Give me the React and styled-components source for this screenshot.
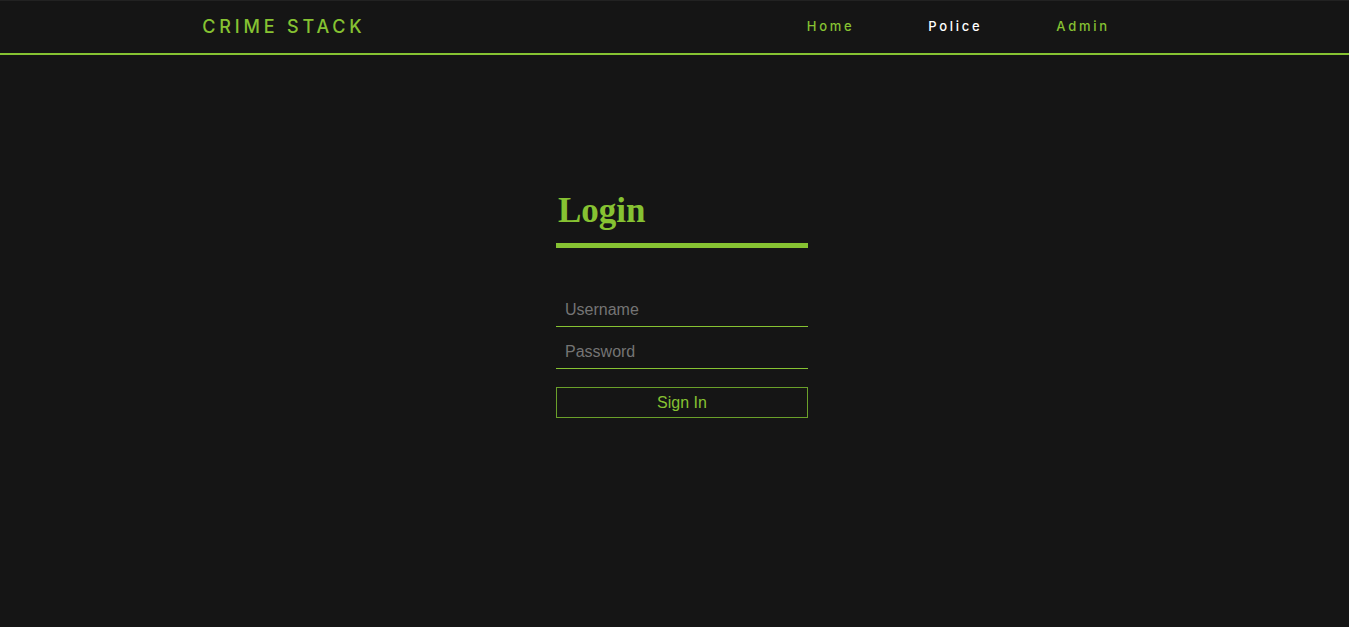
import React from 'react'
import styled, { createGlobalStyle } from 'styled-components'

const GREEN = '#86c232'

const Global = createGlobalStyle`
  html, body {
    margin: 0;
    padding: 0;
    background: #151515;
  }
  * { box-sizing: border-box; }
`

function App() {
  return (
    <Page>
      <Global />
      <Header>
        <Logo href="#">CRIME STACK</Logo>
        <Nav>
          <NavLink href="#">Home</NavLink>
          <NavLink href="#" active>Police</NavLink>
          <NavLink href="#">Admin</NavLink>
        </Nav>
      </Header>
      <Main>
        <Card>
          <Title>Login</Title>
          <Bar />
          <Form onSubmit={(e) => e.preventDefault()}>
            <Input type="text" placeholder="Username" />
            <Input type="password" placeholder="Password" />
            <Button type="submit">Sign In</Button>
          </Form>
        </Card>
      </Main>
    </Page>
  )
}

export default App

const Page = styled.div`
  min-height: 100vh;
  background: #151515;
`

const Header = styled.header`
  height: 55px;
  display: flex;
  align-items: center;
  justify-content: space-between;
  padding: 0 15%;
  border-top: 1px solid #222;
  border-bottom: 2px solid ${GREEN};
`

const Logo = styled.a`
  font-family: Inter, "Liberation Sans", sans-serif;
  font-size: 18px;
  font-weight: 500;
  letter-spacing: 3.8px;
  color: ${GREEN};
  text-decoration: none;
  margin-top: -2px;
`

const Nav = styled.nav`
  display: flex;
  align-items: center;
`

const NavLink = styled.a`
  font-family: Inter, "Liberation Sans", sans-serif;
  font-size: 13px;
  font-weight: 500;
  letter-spacing: 2.7px;
  padding: 0 37px 0 37px;
  margin-top: -2px;
  color: ${(p) => (p.active ? '#fff' : GREEN)};
  text-decoration: none;
`

const Main = styled.main`
  display: flex;
  justify-content: center;
  padding: 136px 0 0 15px;
`

const Card = styled.div`
  width: 252px;
  display: flex;
  flex-direction: column;
`

const Title = styled.h1`
  margin: 0 0 0 2px;
  font-family: "Liberation Serif", serif;
  font-size: 35px;
  font-weight: 700;
  line-height: 40px;
  color: ${GREEN};
`

const Bar = styled.div`
  height: 5px;
  margin-top: 12px;
  background: ${GREEN};
`

const Form = styled.form`
  display: flex;
  flex-direction: column;
  margin-top: 45px;
`

const Input = styled.input`
  height: 34px;
  margin: 0 0 8px;
  padding: 0 9px;
  background: transparent;
  border-width: 0 0 1px 0;
  border-style: solid;
  border-color: ${GREEN};
  border-radius: 0;
  outline: none;
  color: #ccc;
  font-family: "Liberation Sans", sans-serif;
  font-size: 16px;
  font-weight: 300;
  &::placeholder { color: #747474; }
`

const Button = styled.button`
  margin-top: 10px;
  height: 31px;
  background: transparent;
  border: 1px solid #6aa02a;
  color: ${GREEN};
  font-family: "Liberation Sans", sans-serif;
  font-size: 16px;
  font-weight: 300;
  cursor: pointer;
`
